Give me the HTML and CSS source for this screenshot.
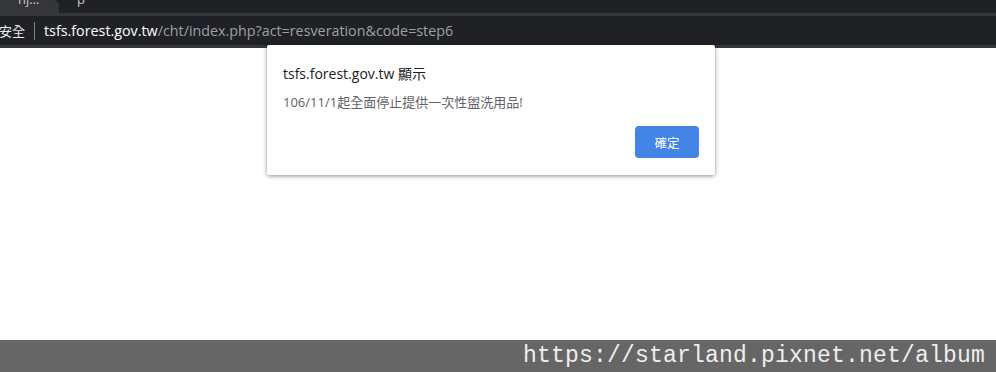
FILE: index.html
```html
<!DOCTYPE html>
<html lang="zh-Hant">
<head>
    <meta charset="UTF-8">
    <meta name="viewport" content="width=device-width, initial-scale=1.0">
    <title>tsfs.forest.gov.tw</title>
    <link rel="stylesheet" href="styles.css">
</head>
<body>
    <div class="browser">
        <div class="tabstrip">
            <div class="tab active"><span class="tab-title">nj...</span></div>
            <div class="tab"><span class="tab-title">p</span></div>
        </div>
        <div class="toolbar">
            <div class="omnibox">
                <span class="secure">安全</span>
                <span class="divider"></span>
                <span class="host">tsfs.forest.gov.tw</span><span class="path">/cht/index.php?act=resveration&amp;code=step6</span>
            </div>
        </div>
        <div class="page"></div>
        <div class="watermark">https://starland.pixnet.net/album</div>
    </div>

    <div class="dialog">
        <h2 class="dialog-title">tsfs.forest.gov.tw 顯示</h2>
        <p class="dialog-message">106/11/1起全面停止提供一次性盥洗用品!</p>
        <div class="dialog-actions">
            <button class="btn-ok">確定</button>
        </div>
    </div>
</body>
</html>
```

FILE: styles.css
```css
body {
    margin: 0;
    padding: 0;
    font-family: "Open Sans", "Noto Sans CJK TC", sans-serif;
    background: #ffffff;
    overflow: hidden;
}

.browser {
    display: flex;
    flex-direction: column;
    height: 372px;
}

.tabstrip {
    height: 13px;
    background: #202124;
    display: flex;
    overflow: hidden;
}

.tab {
    position: relative;
    width: 60px;
    height: 13px;
    overflow: hidden;
}

.tab.active {
    width: 59px;
    background: #35363a;
    border-top-right-radius: 6px;
}

.tab-title {
    display: block;
    margin-top: -9px;
    padding-left: 14px;
    font-size: 13px;
    line-height: 16px;
    color: #c8c8c8;
}

.tab .tab-title {
    padding-left: 18px;
}

.toolbar {
    height: 29px;
    background: #35363a;
    padding: 3px 0;
}

.omnibox {
    height: 29px;
    background: #202124;
    display: flex;
    align-items: center;
    font-size: 14.3px;
    white-space: nowrap;
    margin-left: -1px;
}

.secure {
    color: #e8eaed;
    font-size: 13px;
}

.divider {
    width: 1px;
    height: 18px;
    background: #7d7f83;
    margin: 0 9px 0 9px;
}

.host {
    color: #ffffff;
}

.path {
    color: #9aa0a6;
}

.page {
    flex: 1;
    background: #ffffff;
}

.watermark {
    height: 32px;
    background: #666666;
    color: #eeeeee;
    font-family: "Liberation Mono", monospace;
    font-size: 23px;
    line-height: 32px;
    text-align: right;
    padding-right: 11px;
    letter-spacing: 0.2px;
}

.dialog {
    position: absolute;
    left: 267px;
    top: 45px;
    width: 448px;
    height: 130px;
    box-sizing: border-box;
    background: #ffffff;
    border-radius: 2px;
    box-shadow: 0 1px 4px rgba(0, 0, 0, 0.45);
    padding: 19px 16px 16px 16px;
}

.dialog-title {
    margin: 0;
    font-weight: normal;
    font-size: 14px;
    line-height: 20px;
    color: #202124;
}

.dialog-message {
    margin: 8px 0 0 0;
    font-size: 13px;
    line-height: 20px;
    color: #5f6368;
}

.dialog-actions {
    display: flex;
    justify-content: flex-end;
    margin-top: 14px;
}

.btn-ok {
    width: 64px;
    height: 32px;
    border: none;
    border-radius: 4px;
    background: #4285e6;
    color: #ffffff;
    font-family: "Open Sans", "Noto Sans CJK TC", sans-serif;
    font-size: 12.5px;
    padding: 0;
}
```
